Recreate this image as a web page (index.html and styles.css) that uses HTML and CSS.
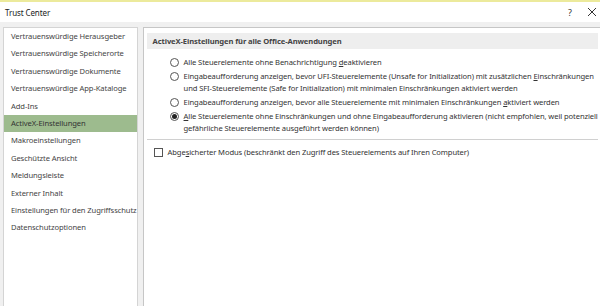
FILE: index.html
```html
<!DOCTYPE html>
<html lang="de">
<head>
<meta charset="utf-8">
<title>Trust Center</title>
<link rel="stylesheet" href="styles.css">
</head>
<body>
<div class="window">
  <div class="topline"></div>
  <div class="titlebar">
    <span class="title">Trust Center</span>
    <span class="tb-btn help">?</span>
    <span class="tb-btn close">
      <svg width="10" height="10" viewBox="0 0 10 10"><path d="M1 1L9 9M9 1L1 9" stroke="#333" stroke-width="1" fill="none"/></svg>
    </span>
  </div>
  <div class="main">
    <nav class="nav">
      <div class="nav-item">Vertrauenswürdige Herausgeber</div>
      <div class="nav-item">Vertrauenswürdige Speicherorte</div>
      <div class="nav-item">Vertrauenswürdige Dokumente</div>
      <div class="nav-item">Vertrauenswürdige App-Kataloge</div>
      <div class="nav-item">Add-Ins</div>
      <div class="nav-item active">ActiveX-Einstellungen</div>
      <div class="nav-item">Makroeinstellungen</div>
      <div class="nav-item">Geschützte Ansicht</div>
      <div class="nav-item">Meldungsleiste</div>
      <div class="nav-item">Externer Inhalt</div>
      <div class="nav-item">Einstellungen für den Zugriffsschutz</div>
      <div class="nav-item">Datenschutzoptionen</div>
    </nav>
    <section class="content">
      <div class="section-head">ActiveX-Einstellungen für alle Office-Anwendungen</div>
      <div class="options">
        <div class="opt"><span class="radio"></span><span class="opt-text">Alle Steuerelemente ohne Benachrichtigung <u>d</u>eaktivieren</span></div>
        <div class="opt"><span class="radio"></span><span class="opt-text">Eingabeaufforderung anzeigen, bevor UFI-Steuerelemente (Unsafe for Initialization) mit zusätzlichen <u>E</u>inschränkungen<br>und SFI-Steuerelemente (Safe for Initialization) mit minimalen Einschränkungen aktiviert werden</span></div>
        <div class="opt"><span class="radio"></span><span class="opt-text">Eingabeaufforderung anzeigen, bevor alle Steuerelemente mit minimalen Einschränkungen <u>a</u>ktiviert werden</span></div>
        <div class="opt"><span class="radio checked"></span><span class="opt-text"><u>A</u>lle Steuerelemente ohne Einschränkungen und ohne Eingabeaufforderung aktivieren (nicht empfohlen, weil potenziell<br>gefährliche Steuerelemente ausgeführt werden können)</span></div>
      </div>
      <div class="sep"></div>
      <div class="check-row"><span class="checkbox"></span><span class="opt-text">Abge<u>s</u>icherter Modus (beschränkt den Zugriff des Steuerelements auf Ihren Computer)</span></div>
    </section>
  </div>
</div>
</body>
</html>
```

FILE: styles.css
```css
* { box-sizing: border-box; }
html, body { margin: 0; padding: 0; }
body {
  width: 600px;
  height: 306px;
  overflow: hidden;
  background: #f0f0f0;
  font-family: "Noto Sans", "Open Sans", sans-serif;
  font-size: 7.6px;
  letter-spacing: -0.1px;
  color: #222;
}
.window { display: flex; flex-direction: column; height: 306px; }
.topline { height: 2px; background: #ecea9c; }
.titlebar {
  height: 20px;
  background: #fff;
  display: flex;
  align-items: center;
  padding-left: 5px;
}
.title { font-size: 8px; color: #222; flex: 1; }
.tb-btn { display: flex; align-items: center; justify-content: center; width: 28px; color: #333; }
.help { font-size: 9px; }
.close { width: 16px; }
.main {
  flex: 1;
  display: flex;
  gap: 5px;
  padding: 5px 0 0 3px;
  min-height: 0;
}
.nav {
  width: 137px;
  background: #fff;
  border: 1px solid #d4d4d4;
  border-bottom: none;
  padding-top: 0;
}
.nav-item {
  height: 17.4px;
  line-height: 17.4px;
  padding-left: 7px;
  color: #444;
  white-space: nowrap;
}
.nav-item.active { background: #9dbb8e; color: #333; }
.content {
  flex: 1;
  background: #fff;
  border: 1px solid #c6c6c6;
  border-right: none;
  border-bottom: none;
  padding: 5px 3px 0 3px;
}
.section-head {
  background: #eeeeee;
  height: 16px;
  line-height: 16px;
  padding-left: 6px;
  font-weight: 700;
  color: #444;
}
.options { padding: 7px 0 0 23px; display: flex; flex-direction: column; gap: 2px; }
.opt { display: flex; align-items: flex-start; }
.opt-text { line-height: 12px; color: #333; white-space: nowrap; }
.radio {
  width: 9px; height: 9px;
  border: 1px solid #555;
  border-radius: 50%;
  margin: 1.5px 5px 0 0;
  flex: none;
  display: flex; align-items: center; justify-content: center;
}
.radio.checked::after {
  content: "";
  width: 5px; height: 5px; border-radius: 50%; background: #222;
}
.sep { height: 1px; background: #d0d0d0; margin: 5px 0 0 0; }
.check-row { display: flex; align-items: flex-start; padding: 6px 0 0 7px; }
.checkbox {
  width: 9px; height: 9px;
  border: 1px solid #555;
  margin: 1.5px 5px 0 0;
  flex: none;
}
u { text-decoration: underline; text-underline-offset: 1px; }
```
